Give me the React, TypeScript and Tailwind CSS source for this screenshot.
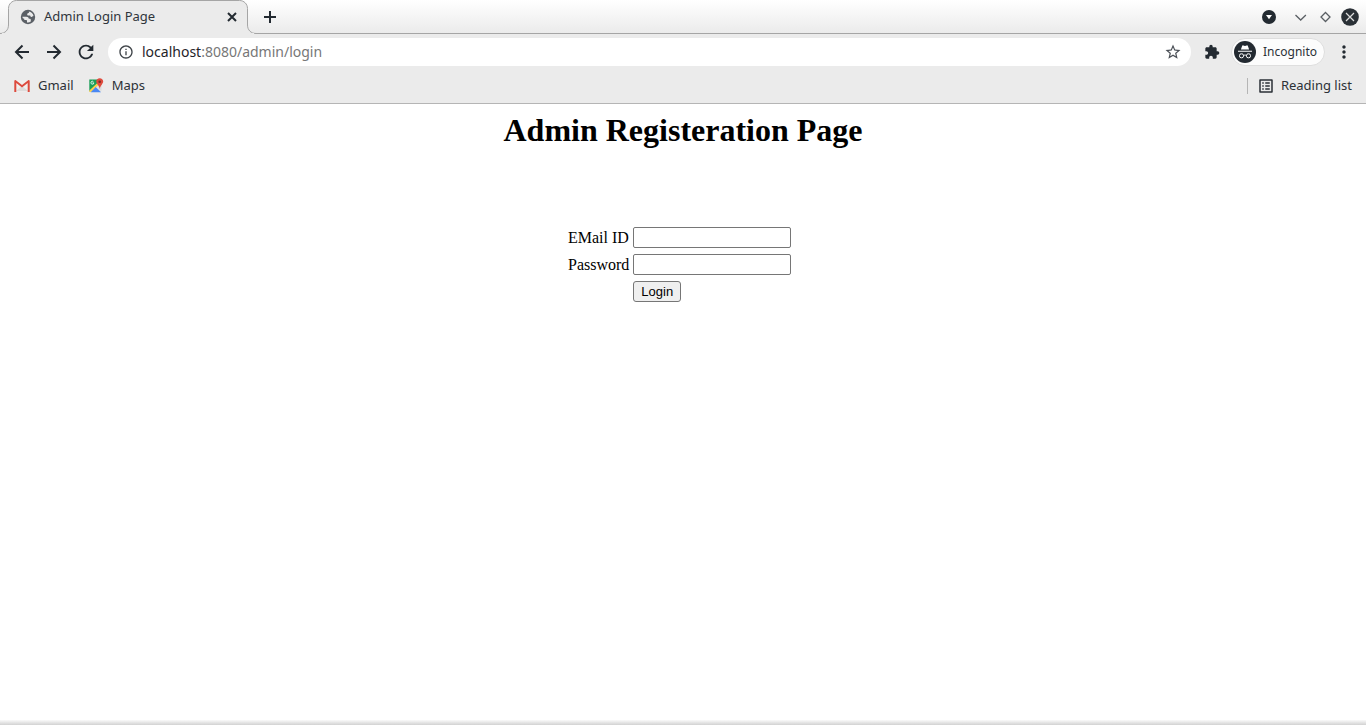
import type { ReactNode } from "react";
import {
  MdExtension,
  MdInfoOutline,
  MdListAlt,
  MdMoreVert,
  MdRefresh,
  MdStarBorder,
} from "react-icons/md";

function IconButton({ label, className = "size-5", children }: { label: string; className?: string; children: ReactNode }) {
  return (
    <button type="button" aria-label={label} className={`flex shrink-0 items-center justify-center text-[#232a31] ${className}`}>
      {children}
    </button>
  );
}

function LineIcon({ d }: { d: string }) {
  return (
    <svg viewBox="0 0 20 20" className="size-5 shrink-0" fill="none" stroke="currentColor" strokeWidth="2" aria-hidden="true">
      <path d={d} />
    </svg>
  );
}

function GlobeIcon() {
  return (
    <svg viewBox="0 0 16 16" className="size-4 shrink-0" aria-hidden="true">
      <circle cx="8" cy="8" r="7.2" fill="#5b6066" />
      <path d="M8.800 2.500c2.400.3 4.300 2.100 4.700 4.500-.6 0-1.100.300-1.500.700-.6.500-1.400.200-1.600-.5l-.2-.6H8.500c-.8 0-1.300-.6-1.300-1.200 0-.7.500-1.200 1.200-1.300.6-.1.700-.8.400-1.600z" fill="#ebebeb" />
      <path d="M2.400 7.700h3.900c1.500 0 2.400.9 2.500 2.100h1.100c.6 0 .9.400.9.900v1.900A5.500 5.500 0 0 1 7 13.400v-1.300c0-.6-.4-1-1-1h-.9c-.6 0-.9-.4-.9-.9v-.5c-1.100 0-1.700-.8-1.800-2z" fill="#ebebeb" />
    </svg>
  );
}

function GmailIcon() {
  return (
    <svg viewBox="0 0 16 12" className="h-3 w-4 shrink-0" aria-hidden="true">
      <path d="M1.500 .5h13v11h-13z" fill="#f1efee" />
      <path d="M2 11 8 6l6 5z" fill="#dedcdb" />
      <path d="M.3 1.200C.3.500.900 0 1.500 0L8 5 14.500 0c.6 0 1.200.5 1.200 1.200V12h-2V3.100L8 7.500 2.300 3.100V12h-2z" fill="#dd4b3e" />
    </svg>
  );
}

function MapsIcon() {
  return (
    <svg viewBox="0 0 16 16" className="size-4 shrink-0" aria-hidden="true">
      <path d="M1.500 1.500h11.500v12.500H1.500z" fill="#e3e3e3" />
      <path d="M1.300 1.500h9.200v3L1.300 13.500z" fill="#1a9f58" />
      <path d="M1.300 12.600 11 3.500l1.400 1.500L3.400 14H1.300z" fill="#fcd04b" />
      <path d="M2.700 14.200 7.700 9 13 14.200z" fill="#4a88f3" />
      <path d="M9.400 8.500 13.500 6v7z" fill="#dcdcdc" />
      <path d="M11.700.2c2 0 3.500 1.500 3.500 3.400 0 2.300-2.700 3.600-3.400 7.300-.7-3.700-3.600-5-3.600-7.300 0-1.900 1.600-3.400 3.500-3.400z" fill="#df4b3d" />
      <circle cx="11.700" cy="3.700" r="1.300" fill="#7c2d25" />
      <path d="M5.900 4.900H4.500M5.300 3.500a1.500 1.500 0 1 0 .6 1.400" fill="none" stroke="#fff" strokeWidth=".8" />
    </svg>
  );
}

function IncognitoIcon() {
  return (
    <svg viewBox="0 0 22 22" className="size-[22px] shrink-0" aria-hidden="true">
      <circle cx="11" cy="11" r="11" fill="#232a31" />
      <path d="M6.900 8.400 8.100 5c.2-.6.7-.8 1.200-.6l1.700.5 1.700-.5c.5-.2 1 0 1.200.6l1.200 3.400zM4 9.700h14v1.100H4z" fill="#fff" />
      <g fill="none" stroke="#fff" strokeWidth="1">
        <rect x="5.500" y="12.800" width="4" height="4" rx="1.700" />
        <rect x="12.500" y="12.800" width="4" height="4" rx="1.700" />
        <path d="M9.500 14.500c.9-.6 2.100-.6 3 0" />
      </g>
    </svg>
  );
}

function TabStrip() {
  return (
    <div className="flex h-[34px] items-center border-b border-[#a5a5a5] bg-linear-to-b from-white to-[#ebebeb]">
      <div className="relative -mb-px flex h-[34px] w-64 shrink-0 items-center">
        <svg viewBox="0 0 256 34" className="absolute inset-0 h-[34px] w-64" aria-hidden="true">
          <path
            d="M0 34V33.500C5 33.500 8.500 30 8.500 25V8.500C8.500 4 12 .5 16.500 .5H239.500C244 .5 247.500 4 247.500 8.500V25C247.500 30 251 33.500 256 33.500V34"
            fill="#ebebeb"
            stroke="#a5a5a5"
          />
          <path d="M2 33h252v1H2z" fill="#ebebeb" />
        </svg>
        <div className="relative flex w-full items-center gap-2 pr-[14px] pl-5">
          <GlobeIcon />
          <span className="grow text-[13px] text-[#2f353b]">Admin Login Page</span>
          <IconButton label="Close tab">
            <LineIcon d="m6 6 8 8m0-8-8 8" />
          </IconButton>
        </div>
      </div>
      <IconButton label="New tab" className="ml-1 size-5">
        <LineIcon d="M10 4v12M4 10h12" />
      </IconButton>
      <div className="ml-auto flex items-center pr-[7px]">
        <IconButton label="Search tabs" className="mr-4 size-4">
          <svg viewBox="0 0 16 16" className="size-4">
            <circle cx="8" cy="8" r="7" fill="#232a31" />
            <path d="M5 6h6l-3 4.200z" fill="#fff" />
          </svg>
        </IconButton>
        <div className="flex items-center gap-2">
          <IconButton label="Minimize" className="size-4">
            <svg viewBox="0 0 16 16" className="size-4" fill="none" stroke="#5a5f64" strokeWidth="1.300">
              <path d="m2.500 6 5.200 5 5.200-5" />
            </svg>
          </IconButton>
          <IconButton label="Maximize" className="size-4">
            <svg viewBox="0 0 16 16" className="size-4" fill="none" stroke="#5a5f64" strokeWidth="1.300">
              <path d="m8.500 3.500 4.500 4.500-4.500 4.500-4.500-4.500z" />
            </svg>
          </IconButton>
          <IconButton label="Close window" className="size-[18px]">
            <svg viewBox="0 0 18 18" className="size-[18px]">
              <circle cx="9" cy="9" r="8.800" fill="#2a3036" />
              <path d="m5 5 8 8m0-8-8 8" stroke="#ddd" strokeWidth="1.200" />
            </svg>
          </IconButton>
        </div>
      </div>
    </div>
  );
}

function Toolbar() {
  return (
    <div className="flex h-9 items-center pr-3 pl-3">
      <div className="mr-3 flex gap-3">
        <IconButton label="Back"><LineIcon d="M17 10H4.200M10.500 3.500 4 10l6.500 6.500" /></IconButton>
        <IconButton label="Forward"><LineIcon d="M3 10h12.800M9.500 3.500 16 10l-6.500 6.500" /></IconButton>
        <IconButton label="Reload"><MdRefresh className="size-[22px] shrink-0" /></IconButton>
      </div>
      <div className="flex h-7 grow items-center gap-2 rounded-full bg-white pr-2 pl-[10px]">
        <MdInfoOutline className="size-4 shrink-0 text-[#3f4449]" />
        <span className="grow text-[14px] leading-5 text-[#777]">
          <span className="text-[#1f2429]">localhost</span>:8080/admin/login
        </span>
        <IconButton label="Bookmark this page">
          <MdStarBorder className="size-[18px] text-[#4a4f56]" />
        </IconButton>
      </div>
      <IconButton label="Extensions" className="mr-[11px] ml-[13px] size-4"><MdExtension className="size-4" /></IconButton>
      <button
        type="button"
        className="flex h-7 shrink-0 items-center gap-[7px] rounded-full border border-[#dedede] bg-[#fcfcfc] pr-[7px] pl-[2px] text-[12px] text-[#2b3137]"
      >
        <IncognitoIcon />
        Incognito
      </button>
      <IconButton label="Menu" className="ml-[9px] size-5"><MdMoreVert className="size-5" /></IconButton>
    </div>
  );
}

function BookmarksBar() {
  return (
    <nav className="flex h-[34px] items-center border-b border-[#b5b5b5] px-[14px] pb-[2px] text-[13px] text-[#2b3137]">
      <a href="#gmail" className="flex items-center gap-2"><GmailIcon />Gmail</a>
      <a href="#maps" className="ml-[14px] flex items-center gap-2"><MapsIcon />Maps</a>
      <a href="#reading-list" className="ml-auto flex items-center">
        <span className="mr-[9px] h-4 w-px bg-[#b5b5b5]" />
        <MdListAlt className="mr-[6px] size-[18px]" />
        Reading list
      </a>
    </nav>
  );
}

const fieldClass = "block h-[21px] w-[158px] rounded-[2px] border border-[#767676] bg-white px-1 font-['Liberation_Sans',sans-serif] text-[13px]";

export default function App() {
  return (
    <div className="flex min-h-screen flex-col bg-white">
      <header className="bg-[#ebebeb] font-['Noto_Sans',sans-serif]">
        <TabStrip />
        <Toolbar />
        <BookmarksBar />
      </header>
      <main className="flex grow flex-col items-center px-2 pt-2 font-['Liberation_Serif',serif] text-black">
        <h1 className="text-[32px] leading-9 font-bold">Admin Registeration Page</h1>
        <form className="mt-[75px]" onSubmit={(event) => event.preventDefault()}>
          <table className="w-[236px] border-separate border-spacing-[2px] text-[16px] leading-[18px] [&_td]:h-[25px] [&_td]:p-px">
            <tbody>
              <tr>
                <td><label htmlFor="email" className="whitespace-nowrap">EMail ID</label></td>
                <td className="w-full"><input id="email" name="email" type="text" className={fieldClass} /></td>
              </tr>
              <tr>
                <td><label htmlFor="password">Password</label></td>
                <td><input id="password" name="password" type="password" className={fieldClass} /></td>
              </tr>
              <tr>
                <td />
                <td>
                  <button type="submit" className="block h-[21px] rounded-[3px] border border-[#767676] bg-[#efefef] px-[7px] font-['Liberation_Sans',sans-serif] text-[13px] leading-[15px]">
                    Login
                  </button>
                </td>
              </tr>
            </tbody>
          </table>
        </form>
      </main>
      <footer className="h-[5px] bg-linear-to-b from-[#fafafa] to-[#d2d2d2]" />
    </div>
  );
}
